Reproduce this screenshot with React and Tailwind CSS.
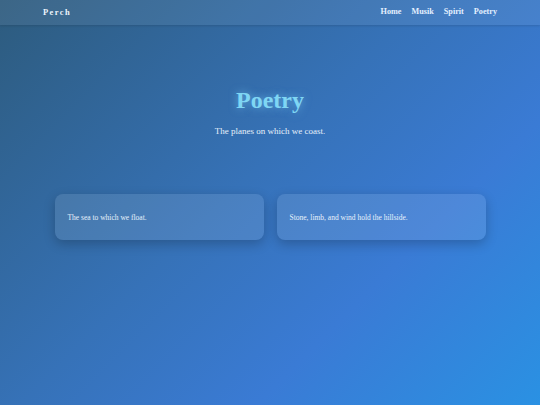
export default function App() {
  return (
    <div
      className="min-h-[405px] w-full bg-[linear-gradient(135deg,#2d5b7d_0%,#3672b8_45%,#3a7bd5_70%,#2a91e3_100%)] text-[#e8f2fc]"
      style={{ fontFamily: '"Liberation Serif", Georgia, serif' }}
    >
      <nav className="h-[25px] bg-white/[0.07] shadow-[0_1px_2px_rgba(0,0,0,0.12)] flex items-center justify-between px-[43px]">
        <span className="text-[8.5px] font-bold tracking-[1.4px] text-[#eef5fc]">Perch</span>
        <div className="flex gap-[10px] text-[8.2px] font-bold text-[#e4f0ff]">
          <span>Home</span>
          <span>Musik</span>
          <span>Spirit</span>
          <span>Poetry</span>
        </div>
      </nav>
      <header className="flex flex-col items-center pt-[62px]">
        <h1 className="text-[24px] leading-[26px] font-bold text-[#7fd6f4] [text-shadow:0_0_8px_rgba(125,211,252,0.6)]">
          Poetry
        </h1>
        <p className="mt-[12px] text-[9px] leading-[12px] text-[#e6f0fa]">The planes on which we coast.</p>
      </header>
      <main className="mx-auto mt-[57px] w-[431px] grid grid-cols-2 gap-[13px]">
        <div className="h-[46px] rounded-[8px] bg-white/10 shadow-[0_4px_12px_rgba(0,0,0,0.22)] flex items-center px-[13px] pt-[1px] text-[7.5px] text-[#e8f2fc]">
          The sea to which we float.
        </div>
        <div className="h-[46px] rounded-[8px] bg-white/10 shadow-[0_4px_12px_rgba(0,0,0,0.22)] flex items-center px-[13px] pt-[1px] text-[7.5px] text-[#e8f2fc]">
          Stone, limb, and wind hold the hillside.
        </div>
      </main>
    </div>
  );
}
